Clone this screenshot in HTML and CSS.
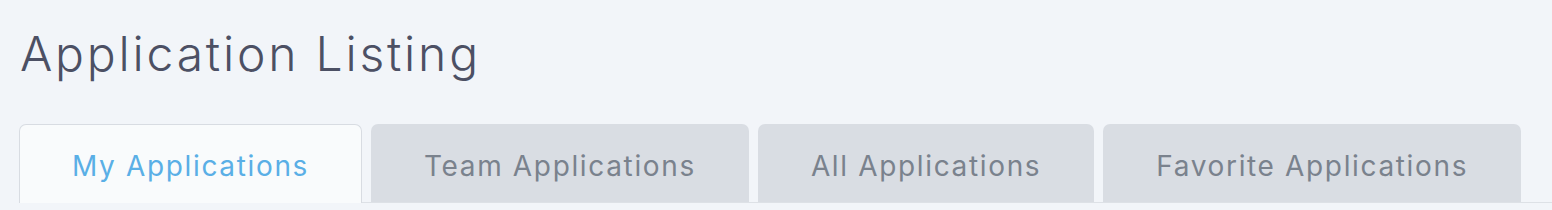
FILE: index.html
```html
<!DOCTYPE html>
<html lang="en">
<head>
  <meta charset="UTF-8" />
  <meta name="viewport" content="width=device-width, initial-scale=1.0"/>
  <title>Application Listing</title>
  <link rel="stylesheet" href="styles.css">
</head>
<body>
  <header>
    <h1>Application Listing</h1>
  </header>

  <nav class="tabs">
    <a class="tab active" href="#">My Applications</a>
    <a class="tab" href="#">Team Applications</a>
    <a class="tab" href="#">All Applications</a>
    <a class="tab" href="#">Favorite Applications</a>
  </nav>
</body>
</html>
```

FILE: styles.css
```css
body {
  background: #f2f5f9;
  font-family: Inter, 'Open Sans', sans-serif;
  margin: 0;
  padding: 0 0 0 19px;
  overflow: hidden;
}

header h1 {
  margin: 0;
  padding: 22px 0 0 1px;
  font-size: 48px;
  font-weight: 300;
  line-height: 64px;
  letter-spacing: 2.8px;
  color: #4c5064;
}

.tabs {
  display: flex;
  align-items: flex-start;
  gap: 9px;
  margin-top: 38px;
  border-bottom: 1px solid #dde1e6;
}

.tab {
  box-sizing: border-box;
  height: 78px;
  padding: 5px 53px 0;
  display: flex;
  align-items: center;
  justify-content: center;
  background: #d9dde3;
  border-radius: 7px 7px 0 0;
  color: #7a828d;
  font-size: 28px;
  letter-spacing: 1.65px;
  text-decoration: none;
}

.tab.active {
  height: 100px;
  margin-bottom: -22px;
  padding: 5px 52px 22px;
  background: #f9fbfc;
  border: 1px solid #d8dce2;
  border-bottom: none;
  color: #5aafe6;
}
```
